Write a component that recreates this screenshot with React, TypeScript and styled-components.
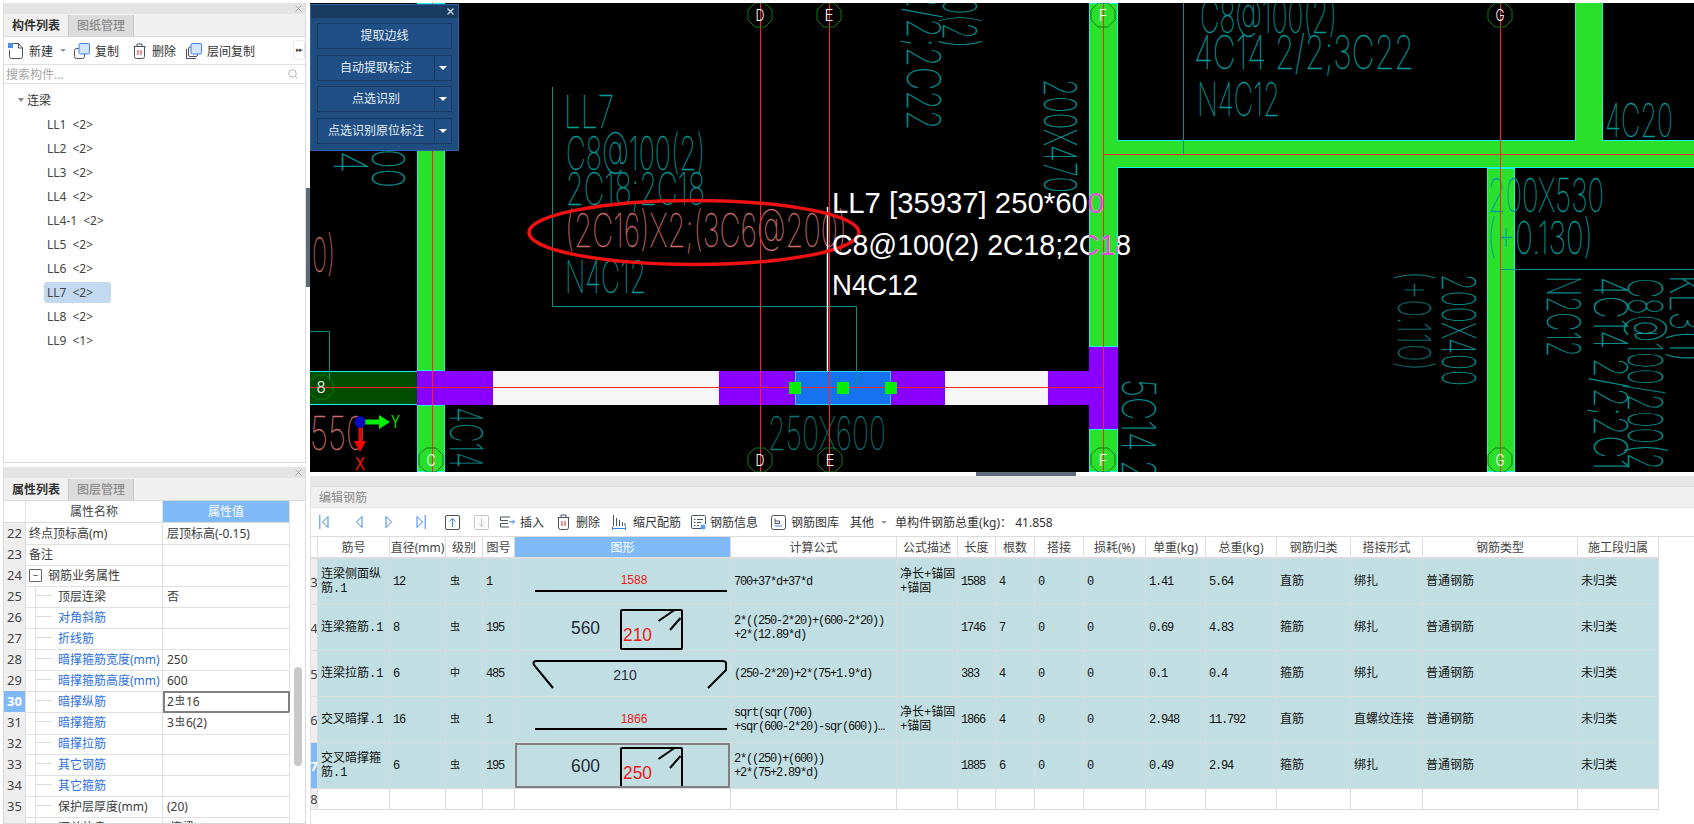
import React from 'react';
import styled, { createGlobalStyle } from 'styled-components';

const Global = createGlobalStyle`
  html, body { margin: 0; padding: 0; background: #fff; }
  body { font-family: "Noto Sans", "Noto Sans CJK SC", sans-serif; font-size: 12px; color: #333; overflow: hidden; }
`;

const CELLFONT = `"Liberation Mono", "Noto Sans CJK SC", monospace`;

const Page = styled.div`
  width: 1694px; height: 824px; overflow: hidden; box-sizing: border-box;
  padding: 3px 0 0 3px; display: grid; grid-template-columns: 303px 1fr; column-gap: 4px;
`;
const LeftColumn = styled.div`display: flex; flex-direction: column; gap: 4px; height: 821px;`;
const Panel = styled.section<{ $h: number }>`
  position: relative; height: ${p => p.$h}px; box-sizing: border-box; flex: none; overflow: hidden;
  border-left: 1px solid #d9d9d9; border-right: 1px solid #d9d9d9; border-bottom: 1px solid #d9d9d9;
  background: #fff; display: flex; flex-direction: column;
`;
const PanelTitle = styled.div`
  height: 11px; flex: none; background: #e4e4e4; display: flex; justify-content: flex-end; align-items: center; padding-right: 3px;
`;
const TabBar = styled.div`
  height: 23px; flex: none; background: #f0f0f0; display: flex; border-bottom: 1px solid #d9d9d9; box-sizing: border-box; padding-top: 1px;
`;
const Tab = styled.div<{ $on?: boolean }>`
  width: 65px; box-sizing: border-box; text-align: center; line-height: 22px; font-size: 12px;
  font-weight: ${p => p.$on ? 700 : 500}; color: ${p => p.$on ? '#333' : '#8c8c8c'};
  background: ${p => p.$on ? '#f0f0f0' : '#dcdcdc'}; border-right: 1px solid #c8c8c8; 
`;
const TreeBar = styled.div`
  height: 28px; flex: none; display: flex; align-items: center; padding-left: 4px; box-sizing: border-box;
  border-bottom: 1px solid #e2e2e2; position: relative;
`;
const ToolItem = styled.div<{ $ml?: number; $gap?: number }>`
  display: flex; align-items: center; gap: ${p => p.$gap ?? 5}px; margin-left: ${p => p.$ml ?? 0}px; white-space: nowrap; color: #333;
`;
const MoreButton = styled.div`
  position: absolute; left: 289px; top: 3px; width: 10px; height: 18px; border: 1px solid #e8e8e8; border-radius: 3px;
  font-size: 7px; line-height: 18px; text-align: center; color: #444; letter-spacing: -1px;
`;
const Caret = styled.i`
  display: inline-block; width: 0; height: 0; border-left: 3px solid transparent; border-right: 3px solid transparent;
  border-top: 3px solid #999;
`;
const TreeCaret = styled.i`
  display: inline-block; width: 0; height: 0; border-left: 3.5px solid transparent; border-right: 3.5px solid transparent;
  border-top: 4px solid #888; margin-left: 1px;
`;
const Search = styled.div`
  height: 19px; flex: none; box-sizing: border-box; border-bottom: 1px solid #e2e2e2; display: flex; align-items: center;
  justify-content: space-between; padding: 0 7px 0 2px; color: #a5a5a5; font-size: 12px;
`;
const Tree = styled.div`padding-top: 4px; display: flex; flex-direction: column;`;
const TreeRow = styled.div`height: 24px; display: flex; align-items: center; padding-left: 13px; gap: 3px; color: #333;`;
const TreeLeaf = styled.div`height: 24px; display: flex; align-items: center; padding-left: 40px;`;
const LeafLabel = styled.span<{ $on?: boolean }>`
  display: inline-flex; align-items: center; height: 21px; box-sizing: border-box; padding: 0 8px 0 3px; gap: 6px; min-width: 67px; border-radius: 3px;
  background: ${p => p.$on ? '#c3d9ef' : 'transparent'}; color: #444; font-size: 12px;
`;

const PropHead = styled.div`
  display: grid; grid-template-columns: 22px 137px 127px; height: 22px; flex: none;
`;
const HeadCell = styled.div<{ $on?: boolean }>`
  box-sizing: border-box; text-align: center; line-height: 21px; font-size: 12px; border-right: 1px solid #e0e0e0; border-bottom: 1px solid #d9d9d9;
  background: ${p => p.$on ? '#7fb9f8' : '#fff'}; color: ${p => p.$on ? '#fff' : '#444'};
`;
const PropRow = styled.div`display: grid; grid-template-columns: 22px 137px 127px; height: 21px; flex: none;`;
const RowNum = styled.div<{ $on?: boolean }>`
  box-sizing: border-box; background: ${p => p.$on ? '#7fb9f8' : '#eeeeee'}; color: ${p => p.$on ? '#fff' : '#444'}; font-weight: ${p => p.$on ? 700 : 400};
  border-right: 1px solid #dcdcdc; border-bottom: 1px solid #dcdcdc; text-align: center; line-height: 21px; font-size: 13px; font-family: "Noto Sans", sans-serif;
`;
const NameCell = styled.div<{ $kind: 'plain' | 'group' | 'child'; $blue?: boolean }>`
  position: relative; box-sizing: border-box; border-right: 1px solid #e0e0e0; border-bottom: 1px solid #e0e0e0; line-height: 21px; white-space: nowrap; overflow: hidden;
  padding-left: ${p => p.$kind === 'plain' ? 3 : p.$kind === 'group' ? 22 : 32}px; font-size: 12px;
  color: ${p => p.$blue ? '#2c6fe0' : '#3b3b3b'};
  ${p => p.$kind === 'child' ? `
    &::before { content: ''; position: absolute; left: 9px; top: 0; bottom: 0; border-left: 1px solid #e2e2e2; }
    &::after { content: ''; position: absolute; left: 10px; top: 9px; width: 16px; border-top: 1px solid #dcdcdc; }
  ` : ''}
`;
const ExpandBox = styled.span`
  position: absolute; left: 3px; top: 4px; width: 11px; height: 11px; border: 1px solid #666; border-radius: 1px; line-height: 10px; text-align: center; font-size: 10px; color: #444;
`;
const ValueCell = styled.div<{ $on?: boolean }>`
  box-sizing: border-box; padding-left: ${p => p.$on ? 2 : 4}px; line-height: ${p => p.$on ? 17 : 21}px; white-space: nowrap; font-size: 12px; color: #3b3b3b; 
  border-right: ${p => p.$on ? '2px solid #808080' : '1px solid #e0e0e0'}; border-bottom: ${p => p.$on ? '2px solid #808080' : '1px solid #e0e0e0'};
  border-top: ${p => p.$on ? '2px solid #808080' : 'none'}; border-left: ${p => p.$on ? '2px solid #808080' : 'none'};
`;
const Grade = styled.span`font-size: 10px; position: relative; top: -2px; margin: 0 1px;`;
const ScrollThumb = styled.div`position: absolute; left: 290px; top: 200px; width: 8px; height: 99px; border-radius: 4px; background: #c9c9c9;`;

const RightColumn = styled.div`position: relative; display: flex; flex-direction: column; height: 821px; min-width: 0;`;
const Canvas = styled.div`position: relative; height: 469px; background: #000; flex: none; overflow: hidden;`;
const Drawing = styled.svg`display: block;`;
const CadText = styled.text<{ $c: string }>`
  font-family: Inter, "Noto Sans", sans-serif; font-weight: 100; fill: ${p => p.$c}; stroke: ${p => p.$c}; stroke-width: 0.35px;
`;
const AxisText = styled.text`font-family: Inter, "Noto Sans", sans-serif; font-weight: 300; fill: #fff;`;
const LabelText = styled.text<{ $c: string }>`font-family: "Liberation Sans", sans-serif; fill: ${p => p.$c};`;
const Float = styled.div`
  position: absolute; left: 0; top: 1px; width: 149px; height: 147px; box-sizing: border-box; background: #1f4d80; border: 1px solid #2e64a5;
  display: flex; flex-direction: column; align-items: center;
`;
const FloatTitle = styled.div`
  height: 13px; width: 100%; flex: none; background: #1a3b60; display: flex; justify-content: flex-end; align-items: center; padding-right: 4px; box-sizing: border-box; margin-bottom: 5px;
`;
const FloatButton = styled.div`
  width: 135px; height: 26px; flex: none; margin-bottom: 5.5px; box-sizing: border-box; display: flex; border: 1px solid #183a62; background: #1f4f84; color: #e6edf5; font-size: 12px;
`;
const FloatLabel = styled.div`flex: 1; text-align: center; line-height: 24px;`;
const FloatDrop = styled.div`
  width: 16px; flex: none; border-left: 1px solid #183a62; display: flex; align-items: center; justify-content: center;
`;
const WhiteCaret = styled.i`
  width: 0; height: 0; border-left: 4px solid transparent; border-right: 4px solid transparent; border-top: 4px solid #fff;
`;
const SideHandle = styled.div`position: absolute; left: -4px; top: 185px; width: 4px; height: 99px; background: #5f6b78;`;
const Splitter = styled.div`height: 4px; flex: none; background: #fff; padding-left: 666px;`;
const SplitTab = styled.div`width: 100px; height: 4px; background: #5f6b78;`;
const EditorBand = styled.div`height: 11px; flex: none; background: #e6e6e6; border-bottom: 1px solid #dcdcdc; box-sizing: border-box;`;
const Editor = styled.div`border-left: 1px solid #e2e2e2; flex: 1; display: flex; flex-direction: column; min-height: 0;`;
const EditorTitle = styled.div`height: 21px; flex: none; background: #f0f0f0; line-height: 21px; padding-left: 8px; color: #8a8a8a; font-size: 12px; border-bottom: 1px solid #e4e4e4; box-sizing: border-box;`;
const EditorBar = styled.div`height: 29px; flex: none; display: flex; align-items: center; padding-left: 8px; box-sizing: border-box; border-bottom: 1px solid #dcdcdc; color: #333;`;

const COLS = '7px 72px 56px 37px 32px 216px 166px 61px 38px 39px 49px 62px 60px 71px 74px 72px 155px 81px';
const GridRow = styled.div<{ $h: number; $fill?: boolean }>`
  display: grid; grid-template-columns: ${COLS}; height: ${p => p.$h}px; flex: none; width: 1348px;
  background: ${p => p.$fill ? '#c1dfe2' : '#fff'};
`;
const GridHead = styled.div<{ $on?: boolean }>`
  box-sizing: border-box; border-right: 1px solid #dcdcdc; border-bottom: 2px solid #dcdcdc; text-align: center; line-height: 21px; white-space: nowrap; overflow: hidden;
  font-size: 12px; color: ${p => p.$on ? '#fff' : '#444'}; background: ${p => p.$on ? '#7fb9f8' : '#fff'};
`;
const RowHead = styled.div<{ $on?: boolean }>`
  box-sizing: border-box; overflow: hidden; display: flex; align-items: center; justify-content: center; font-size: 13px; border-bottom: 1px solid #dcdcdc; border-right: 1px solid #dcdcdc;
  background: ${p => p.$on ? '#7fb9f8' : '#eeeeee'}; color: ${p => p.$on ? '#fff' : '#444'}; font-weight: ${p => p.$on ? 700 : 400};
`;
const Cell = styled.div<{ $mono?: boolean; $grade?: boolean }>`
  box-sizing: border-box; border-right: 1px solid #d6dcdc; border-bottom: 1px solid #d6dcdc; padding: 0 0 0 ${p => p.$grade ? 4 : 3}px; display: flex; flex-direction: column; justify-content: center;
  font-family: ${CELLFONT}; font-size: ${p => p.$grade ? 10 : 12}px; line-height: 14px; color: #111; overflow: hidden;
  letter-spacing: ${p => p.$mono ? '-1.2px' : '0'};
`;
const Wrap = styled.span`word-break: break-all; letter-spacing: 0;`;
const FormulaLine = styled.span`white-space: nowrap;`;
const ShapeCell = styled.div<{ $on?: boolean }>`
  box-sizing: border-box; border-right: 1px solid #d6dcdc; border-bottom: 1px solid #d6dcdc; overflow: hidden; position: relative;
  ${p => p.$on ? `&::after { content: ''; position: absolute; inset: 0; border: 2px solid #808080; }` : ''}
`;

const X = () => (
  <svg width="7" height="7" viewBox="0 0 7 7"><path d="M.5.5l6 6M6.5.5l-6 6" stroke="#a8a8a8" strokeWidth="1" fill="none" /></svg>
);
const FX = () => (
  <svg width="7" height="7" viewBox="0 0 7 7"><path d="M.5.5l6 6M6.5.5l-6 6" stroke="#c4d4e6" strokeWidth="1.4" fill="none" /></svg>
);

const NewIcon = () => (
  <svg width="16" height="16" viewBox="0 0 16 16" fill="none">
    <path d="M1.5 7v6.5q0 2 2 2h9q2 0 2-2V5l-4-4.5H5" stroke="#4a5260" />
    <path d="M10.5.5V5h4" stroke="#4a5260" />
    <rect x="0" y="0" width="5" height="5" fill="#4a90e8" />
  </svg>
);
const CopyIcon = () => (
  <svg width="16" height="16" viewBox="0 0 16 16" fill="none">
    <rect x=".5" y="5.5" width="10" height="10" rx="2" stroke="#4a5260" />
    <rect x="5" y=".5" width="10.5" height="10.5" rx="1.5" fill="#d5e5fb" stroke="#3b82e0" />
  </svg>
);
const LayerIcon = () => (
  <svg width="16" height="16" viewBox="0 0 16 16" fill="none">
    <path d="M.5 6v9.5H10" stroke="#4a5260" />
    <rect x="2.5" y="4" width="9" height="9.5" rx="1.5" stroke="#4a5260" />
    <rect x="5" y=".5" width="10.5" height="10.5" rx="1.5" fill="#d5e5fb" stroke="#3b82e0" />
  </svg>
);
const TrashIcon = () => (
  <svg width="13" height="16" viewBox="0 0 13 16" fill="none">
    <path d="M.5 3.5h12" stroke="#4a5260" />
    <path d="M4 3.5V1h5v2.5" stroke="#4a5260" />
    <path d="M1.5 3.5v10q0 2 2 2h6q2 0 2-2v-10" stroke="#4a5260" />
    <path d="M5 7v5M8 7v5" stroke="#e02020" />
  </svg>
);
const SearchIcon = () => (
  <svg width="10" height="10" viewBox="0 0 10 10" fill="none">
    <circle cx="4.5" cy="4.5" r="3.8" stroke="#b4b4b4" /><path d="M7.5 7.5L9.5 9.5" stroke="#b4b4b4" />
  </svg>
);
const NavIcon = ({ dir, bar }: { dir: 'l' | 'r'; bar?: boolean }) => (
  <svg width="11" height="14" viewBox="0 0 11 14" fill="none">
    {dir === 'l'
      ? <><path d="M9 1.5L3.5 7 9 12.5z" stroke="#3a86e8" />{bar && <path d="M.8 0v14" stroke="#3a86e8" />}</>
      : <><path d="M2 1.5L7.5 7 2 12.5z" stroke="#3a86e8" />{bar && <path d="M10.2 0v14" stroke="#3a86e8" />}</>}
  </svg>
);
const MoveIcon = ({ up }: { up?: boolean }) => (
  <svg width="15" height="15" viewBox="0 0 15 15" fill="none">
    <rect x=".5" y=".5" width="14" height="14" rx="1.5" stroke={up ? '#4a5260' : '#c4c4c4'} />
    {up
      ? <path d="M7.5 12V4M4.5 6.5l3-3 3 3" stroke="#3a86e8" />
      : <path d="M7.5 3v8M4.5 8.5l3 3 3-3" stroke="#c4c4c4" />}
  </svg>
);
const InsertIcon = () => (
  <svg width="15" height="12" viewBox="0 0 15 12" fill="none">
    <path d="M10 1H.5v3.5H8M8 7.5H.5V11H9" stroke="#4a5260" />
    <path d="M9 5.8h5.5M12.5 3.8l2 2-2 2" stroke="#3a86e8" />
  </svg>
);
const RulerIcon = () => (
  <svg width="14" height="15" viewBox="0 0 14 15" fill="none">
    <path d="M1.5 0v11M4.5 3v8M7.5 5v6M10.5 7v4M13 8v3" stroke="#4a5260" />
    <path d="M.5 13.5h13M.5 11.5v4M13.5 11.5v4" stroke="#3a86e8" />
  </svg>
);
const InfoIcon = () => (
  <svg width="15" height="15" viewBox="0 0 15 15" fill="none">
    <path d="M10 13.5H1.5q-1 0-1-1v-11q0-1 1-1h12q1 0 1 1V9" stroke="#4a5260" />
    <path d="M3 4.5h1.5M6 4.5h6M3 7.5h1.5M6 7.5h4M3 10.5h1.5M6 10.5h2" stroke="#4a5260" />
    <circle cx="12" cy="12" r="2.5" fill="#5aa0ee" />
  </svg>
);
const LibIcon = () => (
  <svg width="15" height="15" viewBox="0 0 15 15" fill="none">
    <rect x=".5" y=".5" width="14" height="14" rx="2" stroke="#4a5260" />
    <path d="M4 3.5v5h4.5v-2.5H4" stroke="#4a5260" />
    <path d="M4 11h7" stroke="#3a86e8" />
  </svg>
);

const TEAL = '#069a9a';
const DIM = '#0c7475';
const SALMON = '#c96b6b';
type H = [string, number, number, number, number, string?];
const horizontal: H[] = [
  ['LL7', 564, 614, 95, 128],
  ['C8@100(2)', 566, 705, 136, 170],
  ['2C18;2C18', 566, 705, 172, 205],
  ['(2C16)X2;(3C6@200)', 565, 847, 213, 247, SALMON],
  ['N4C12', 565, 646, 260, 293],
  ['0)', 312, 335, 237, 272, SALMON],
  ['550', 310, 365, 416, 450, SALMON],
  ['250X600', 768, 886, 416, 450, DIM],
  ['C8@100(2)', 1200, 1337, -1, 33],
  ['4C14 2/2;3C22', 1194, 1414, 35, 69],
  ['N4C12', 1197, 1280, 82, 116],
  ['4C20', 1605, 1673, 103, 137],
  ['200X530', 1488, 1604, 178, 212],
  ['(+0.130)', 1487, 1593, 221, 254],
];
type V = [string, number, number, number, number, string?];
const vertical: V[] = [
  ['2/2;2C22', 907, 941, -12, 130],
  ['C8@100(2)', 943, 977, -90, 48],
  ['200X470', 1044, 1077, 79, 193],
  ['(+0.110)', 1398, 1431, 271, 371, DIM],
  ['200X400', 1442, 1476, 274, 386],
  ['N2C12', 1547, 1581, 276, 357],
  ['4C14 2/2;2C1', 1594, 1628, 277, 470],
  ['C8@100/200(2', 1628, 1663, 278, 470],
  ['KL3(1)', 1670, 1704, 275, 362],
  ['5C14 2', 1122, 1156, 379, 480],
  ['4C14', 450, 483, 407, 468],
  ['C14', 334, 368, 110, 173],
  ['X400', 372, 405, 110, 188],
];
const CAP = 0.727;

const Beam = ({ x, y, w, h }: { x: number; y: number; w: number; h: number }) => (
  <rect x={x + 0.5} y={y + 0.5} width={w - 1} height={h - 1} fill="#2be02b" stroke="#19f5e5" strokeWidth="1" />
);
const Axis = ({ x, y, t }: { x: number; y: number; t: string }) => (
  <>
    <polygon points={`${x - 5},${y - 12} ${x + 5},${y - 12} ${x + 12},${y - 5} ${x + 12},${y + 5} ${x + 5},${y + 12} ${x - 5},${y + 12} ${x - 12},${y + 5} ${x - 12},${y - 5}`} fill="none" stroke="#0c7a0c" />
    <AxisText x={x - 4.5} y={y + 6} fontSize="16" textLength="9" lengthAdjust="spacingAndGlyphs">{t}</AxisText>
  </>
);

const CadDrawing = () => (
  <Drawing width="1384" height="469" viewBox="310 3 1384 469">
    <defs>
      <clipPath id="col-f"><rect x="1089" y="3" width="29" height="344" /></clipPath>
    </defs>
    {/* structural members */}
    <Beam x={417} y={3} w={28} h={368} />
    <Beam x={417} y={405} w={28} h={67} />
    <Beam x={1089} y={3} w={29} h={344} />
    <Beam x={1089} y={429} w={29} h={43} />
    <Beam x={1117} y={140} w={580} h={28} />
    <rect x="1090" y="141" width="30" height="26" fill="#2be02b" />
    <Beam x={1487} y={168} w={28} h={304} />
    <Beam x={1575} y={0} w={28} h={141} />
    <rect x="1576" y="138" width="26" height="6" fill="#2be02b" />
    <rect x="310" y="371" width="107" height="34" fill="#004d00" />
    <path d="M310 371.5h107M310 404.5h107" stroke="#19f5e5" />
    <rect x="417" y="371" width="76" height="34" fill="#8a00ff" />
    <rect x="493" y="371" width="226" height="34" fill="#f6f6f6" />
    <rect x="719" y="371" width="76" height="34" fill="#8a00ff" />
    <rect x="795.5" y="371.5" width="95" height="33" fill="#1673f0" stroke="#35d2ff" />
    <rect x="891" y="371" width="54" height="34" fill="#8a00ff" />
    <rect x="945" y="371" width="103" height="34" fill="#f6f6f6" />
    <rect x="1048" y="371" width="41" height="34" fill="#8a00ff" />
    <rect x="1089" y="347" width="29" height="82" fill="#8a00ff" />
    {/* leader lines */}
    <g stroke="#0a8f8f" fill="none">
      <path d="M552.5 87V306.5H856.5V387" />
      <path d="M310 331.5H329.5V380" />
      <path d="M1183.5 3V154" />
      <path d="M1500 269.5H1694" />
    </g>
    {horizontal.map(([t, x0, x1, y0, y1, c], i) => (
      <CadText key={i} $c={c ?? TEAL} x={x0} y={y1} fontSize={(y1 - y0) / CAP} textLength={x1 - x0} lengthAdjust="spacingAndGlyphs">{t}</CadText>
    ))}
    {vertical.map(([t, x0, x1, y0, y1, c], i) => (
      <CadText key={i} $c={c ?? TEAL} transform={`translate(${x0} ${y0}) rotate(90)`} fontSize={(x1 - x0) / CAP} textLength={y1 - y0} lengthAdjust="spacingAndGlyphs">{t}</CadText>
    ))}
    {/* axes */}
    <g stroke="#ff2424" fill="none">
      <path d="M310 387.5H1103.5" />
      <path d="M1103 154.5H1694" />
      <path d="M432.5 3V472M760.5 3V472M829.5 3V472M1103.5 3V472M1500.5 3V472" />
    </g>
    <path d="M827.5 207V371" stroke="#fff" strokeWidth="1.5" />
    <ellipse cx="694" cy="232.5" rx="165" ry="32" fill="none" stroke="#f01212" strokeWidth="3.5" />
    <Axis x={760} y={15} t="D" />
    <Axis x={829} y={15} t="E" />
    <Axis x={1103} y={15} t="F" />
    <Axis x={1500} y={15} t="G" />
    <Axis x={321} y={387} t="8" />
    <Axis x={431} y={460} t="C" />
    <Axis x={760} y={460} t="D" />
    <Axis x={830} y={460} t="E" />
    <Axis x={1103} y={460} t="F" />
    <Axis x={1500} y={460} t="G" />
    {/* handles */}
    <rect x="789" y="382" width="12" height="12" fill="#00f000" />
    <rect x="837" y="382" width="12" height="12" fill="#00f000" />
    <rect x="885" y="382" width="12" height="12" fill="#00f000" />
    {/* tooltip label */}
    <LabelText $c="#fff" x="832" y="213" fontSize="29" textLength="272" lengthAdjust="spacingAndGlyphs">LL7 [35937] 250*600</LabelText>
    <LabelText $c="#fff" x="832" y="255" fontSize="29" textLength="299" lengthAdjust="spacingAndGlyphs">C8@100(2) 2C18;2C18</LabelText>
    <LabelText $c="#fff" x="832" y="295" fontSize="29" textLength="86" lengthAdjust="spacingAndGlyphs">N4C12</LabelText>
    <g clipPath="url(#col-f)">
      <LabelText $c="#d84fd8" x="832" y="213" fontSize="29" textLength="272" lengthAdjust="spacingAndGlyphs">LL7 [35937] 250*600</LabelText>
      <LabelText $c="#d84fd8" x="832" y="255" fontSize="29" textLength="299" lengthAdjust="spacingAndGlyphs">C8@100(2) 2C18;2C18</LabelText>
    </g>
    {/* UCS */}
    <path d="M363 422H380" stroke="#00f000" strokeWidth="5" />
    <polygon points="379,415 390,422 379,429" fill="#00f000" />
    <path d="M360 425V442" stroke="#ff0000" strokeWidth="3" />
    <polygon points="354,441 366,441 360,452" fill="#ff0000" />
    <ellipse cx="360" cy="422" rx="5.5" ry="6" fill="#0a0ac0" />
    <LabelText $c="#00e000" x="391" y="428" fontSize="18" textLength="9" lengthAdjust="spacingAndGlyphs">Y</LabelText>
    <LabelText $c="#ff1010" x="355" y="470" fontSize="18" textLength="10" lengthAdjust="spacingAndGlyphs">X</LabelText>
  </Drawing>
);

const Straight = ({ t, ly, ty }: { t: string; ly: number; ty: number }) => (
  <svg width="216" height="46" viewBox="0 0 216 46">
    <LabelText $c="#f01818" x="119" y={ty} fontSize="12" textAnchor="middle">{t}</LabelText>
    <path d={`M20 ${ly}H212`} stroke="#000" strokeWidth="2" />
  </svg>
);
const Stirrup = ({ a, b }: { a: string; b: string }) => (
  <svg width="216" height="46" viewBox="0 0 216 46" fill="none">
    <LabelText $c="#1f2a3a" x="56" y="29" fontSize="18" textLength="29" lengthAdjust="spacingAndGlyphs">{a}</LabelText>
    <rect x="106" y="5" width="61" height="39" stroke="#000" strokeWidth="2" rx="1" />
    <path d="M143.5 16L159.5 5M155 25L165.5 13" stroke="#000" strokeWidth="2" />
    <LabelText $c="#f01818" x="108" y="36" fontSize="18" textLength="29" lengthAdjust="spacingAndGlyphs">{b}</LabelText>
  </svg>
);
const Hook = () => (
  <svg width="216" height="46" viewBox="0 0 216 46" fill="none">
    <path d="M38 37L19 14Q17 10 22 10H207Q212 10 211 14V19L193 37" stroke="#000" strokeWidth="2" />
    <LabelText $c="#1f2a3a" x="110" y="29" fontSize="14" textAnchor="middle">210</LabelText>
  </svg>
);

type Bar = {
  n: string; name: string; d: string; g: string; no: string; shape: React.ReactNode; f: string[]; desc?: string[];
  len: string; cnt: string; unit: string; total: string; cat: string; form: string; on?: boolean;
};
const bars: Bar[] = [
  { n: '3', name: '连梁侧面纵筋.1', d: '12', g: '虫', no: '1', shape: <Straight t="1588" ly={32} ty={25} />, f: ['700+37*d+37*d'], desc: ['净长+锚固', '+锚固'], len: '1588', cnt: '4', unit: '1.41', total: '5.64', cat: '直筋', form: '绑扎' },
  { n: '4', name: '连梁箍筋.1', d: '8', g: '虫', no: '195', shape: <Stirrup a="560" b="210" />, f: ['2*((250-2*20)+(600-2*20))', '+2*(12.89*d)'], len: '1746', cnt: '7', unit: '0.69', total: '4.83', cat: '箍筋', form: '绑扎' },
  { n: '5', name: '连梁拉筋.1', d: '6', g: '中', no: '485', shape: <Hook />, f: ['(250-2*20)+2*(75+1.9*d)'], len: '383', cnt: '4', unit: '0.1', total: '0.4', cat: '箍筋', form: '绑扎' },
  { n: '6', name: '交叉暗撑.1', d: '16', g: '虫', no: '1', shape: <Straight t="1866" ly={32} ty={26} />, f: ['sqrt(sqr(700)', '+sqr(600-2*20)-sqr(600))…'], desc: ['净长+锚固', '+锚固'], len: '1866', cnt: '4', unit: '2.948', total: '11.792', cat: '直筋', form: '直螺纹连接' },
  { n: '7', name: '交叉暗撑箍筋.1', d: '6', g: '虫', no: '195', shape: <Stirrup a="600" b="250" />, f: ['2*((250)+(600))', '+2*(75+2.89*d)'], len: '1885', cnt: '6', unit: '0.49', total: '2.94', cat: '箍筋', form: '绑扎', on: true },
];
const heads = ['', '筋号', '直径(mm)', '级别', '图号', '图形', '计算公式', '公式描述', '长度', '根数', '搭接', '损耗(%)', '单重(kg)', '总重(kg)', '钢筋归类', '搭接形式', '钢筋类型', '施工段归属'];

type P = { n: number; name: string; v?: React.ReactNode; kind: 'plain' | 'group' | 'child'; blue?: boolean; on?: boolean };
const props: P[] = [
  { n: 22, name: '终点顶标高(m)', v: '层顶标高(-0.15)', kind: 'plain' },
  { n: 23, name: '备注', kind: 'plain' },
  { n: 24, name: '钢筋业务属性', kind: 'group' },
  { n: 25, name: '顶层连梁', v: '否', kind: 'child' },
  { n: 26, name: '对角斜筋', kind: 'child', blue: true },
  { n: 27, name: '折线筋', kind: 'child', blue: true },
  { n: 28, name: '暗撑箍筋宽度(mm)', v: '250', kind: 'child', blue: true },
  { n: 29, name: '暗撑箍筋高度(mm)', v: '600', kind: 'child', blue: true },
  { n: 30, name: '暗撑纵筋', v: <>2<Grade>虫</Grade>16</>, kind: 'child', blue: true, on: true },
  { n: 31, name: '暗撑箍筋', v: <>3<Grade>虫</Grade>6(2)</>, kind: 'child', blue: true },
  { n: 32, name: '暗撑拉筋', kind: 'child', blue: true },
  { n: 33, name: '其它钢筋', kind: 'child', blue: true },
  { n: 34, name: '其它箍筋', kind: 'child', blue: true },
  { n: 35, name: '保护层厚度(mm)', v: '(20)', kind: 'child' },
  { n: 36, name: '汇总信息', v: '(连梁)', kind: 'child' },
];
const leaves = ['LL1', 'LL2', 'LL3', 'LL4', 'LL4-1', 'LL5', 'LL6', 'LL7', 'LL8', 'LL9'];
const floats = [
  { t: '提取边线' }, { t: '自动提取标注', d: true }, { t: '点选识别', d: true }, { t: '点选识别原位标注', d: true },
];

export default function App() {
  return (
    <>
      <Global />
      <Page>
        <LeftColumn>
          <Panel $h={460}>
            <PanelTitle><X /></PanelTitle>
            <TabBar><Tab $on>构件列表</Tab><Tab>图纸管理</Tab></TabBar>
            <TreeBar>
              <ToolItem><NewIcon />新建</ToolItem>
              <ToolItem $ml={7}><Caret /></ToolItem>
              <ToolItem $ml={8}><CopyIcon />复制</ToolItem>
              <ToolItem $ml={14} $gap={6}><TrashIcon />删除</ToolItem>
              <ToolItem $ml={10}><LayerIcon />层间复制</ToolItem>
              <MoreButton>▸▸</MoreButton>
            </TreeBar>
            <Search>搜索构件...<SearchIcon /></Search>
            <Tree>
              <TreeRow><TreeCaret />连梁</TreeRow>
              {leaves.map(l => (
                <TreeLeaf key={l}>
                  <LeafLabel $on={l === 'LL7'}><span>{l}</span><span>&lt;{l === 'LL9' ? 1 : 2}&gt;</span></LeafLabel>
                </TreeLeaf>
              ))}
            </Tree>
          </Panel>
          <Panel $h={357}>
            <PanelTitle><X /></PanelTitle>
            <TabBar><Tab $on>属性列表</Tab><Tab>图层管理</Tab></TabBar>
            <PropHead>
              <HeadCell />
              <HeadCell>属性名称</HeadCell>
              <HeadCell $on>属性值</HeadCell>
            </PropHead>
            {props.map(p => (
              <PropRow key={p.n}>
                <RowNum $on={p.on}>{p.n}</RowNum>
                <NameCell $kind={p.kind} $blue={p.blue}>
                  {p.kind === 'group' && <ExpandBox>−</ExpandBox>}
                  {p.name}
                </NameCell>
                <ValueCell $on={p.on}>{p.v}</ValueCell>
              </PropRow>
            ))}
            <ScrollThumb />
          </Panel>
        </LeftColumn>
        <RightColumn>
          <SideHandle />
          <Canvas>
            <CadDrawing />
            <Float>
              <FloatTitle><FX /></FloatTitle>
              {floats.map(f => (
                <FloatButton key={f.t}>
                  <FloatLabel>{f.t}</FloatLabel>
                  {f.d && <FloatDrop><WhiteCaret /></FloatDrop>}
                </FloatButton>
              ))}
            </Float>
          </Canvas>
          <Splitter><SplitTab /></Splitter>
          <EditorBand />
          <Editor>
            <EditorTitle>编辑钢筋</EditorTitle>
            <EditorBar>
              <ToolItem><NavIcon dir="l" bar /></ToolItem>
              <ToolItem $ml={23}><NavIcon dir="l" /></ToolItem>
              <ToolItem $ml={20}><NavIcon dir="r" /></ToolItem>
              <ToolItem $ml={20}><NavIcon dir="r" bar /></ToolItem>
              <ToolItem $ml={19}><MoveIcon up /></ToolItem>
              <ToolItem $ml={14}><MoveIcon /></ToolItem>
              <ToolItem $ml={11}><InsertIcon />插入</ToolItem>
              <ToolItem $ml={13} $gap={6}><TrashIcon />删除</ToolItem>
              <ToolItem $ml={12} $gap={7}><RulerIcon />缩尺配筋</ToolItem>
              <ToolItem $ml={10} $gap={4}><InfoIcon />钢筋信息</ToolItem>
              <ToolItem $ml={13}><LibIcon />钢筋图库</ToolItem>
              <ToolItem $ml={11} $gap={7}>其他<Caret /></ToolItem>
              <ToolItem $ml={8}>单构件钢筋总重(kg)： 41.858</ToolItem>
            </EditorBar>
            <GridRow $h={22}>
              {heads.map((h, i) => <GridHead key={i} $on={h === '图形'}>{h}</GridHead>)}
            </GridRow>
            {bars.map(b => (
              <GridRow key={b.n} $h={46} $fill>
                <RowHead $on={b.on}>{b.n}</RowHead>
                <Cell><Wrap>{b.name}</Wrap></Cell>
                <Cell $mono>{b.d}</Cell>
                <Cell $grade>{b.g}</Cell>
                <Cell $mono>{b.no}</Cell>
                <ShapeCell $on={b.on}>{b.shape}</ShapeCell>
                <Cell $mono>{b.f.map(l => <FormulaLine key={l}>{l}</FormulaLine>)}</Cell>
                <Cell>{b.desc?.map(l => <FormulaLine key={l}>{l}</FormulaLine>)}</Cell>
                <Cell $mono>{b.len}</Cell>
                <Cell $mono>{b.cnt}</Cell>
                <Cell $mono>0</Cell>
                <Cell $mono>0</Cell>
                <Cell $mono>{b.unit}</Cell>
                <Cell $mono>{b.total}</Cell>
                <Cell>{b.cat}</Cell>
                <Cell>{b.form}</Cell>
                <Cell>普通钢筋</Cell>
                <Cell>未归类</Cell>
              </GridRow>
            ))}
            <GridRow $h={21}>
              <RowHead>8</RowHead>
              {Array.from({ length: 17 }).map((_, i) => <Cell key={i} />)}
            </GridRow>
          </Editor>
        </RightColumn>
      </Page>
    </>
  );
}
